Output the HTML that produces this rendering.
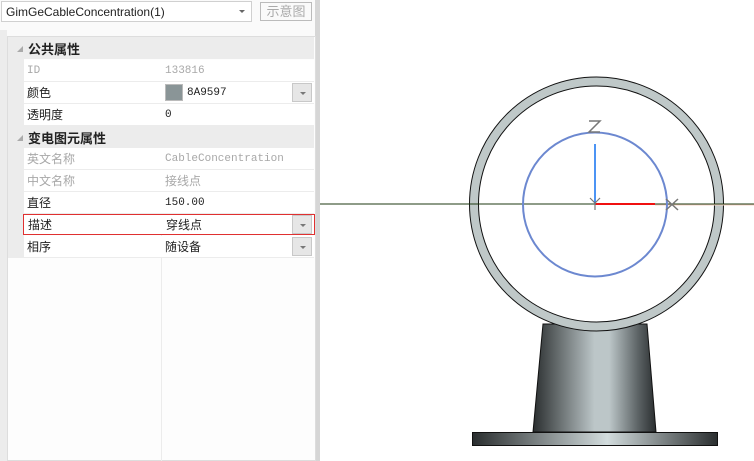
<!DOCTYPE html>
<html><head><meta charset="utf-8"><style>
*{margin:0;padding:0;box-sizing:border-box}
body{width:754px;height:461px;background:#fff;position:relative;overflow:hidden;font-family:"Liberation Sans","Noto Sans CJK SC",sans-serif;font-size:12px;color:#222}
.a{position:absolute}
.row{position:absolute;left:24px;width:290px;height:22px;border-bottom:1px solid #ececec}
.n{position:absolute;left:3px;top:2px}
.v{position:absolute;left:141px;top:2px}
.g{color:#a8a8a8}
.mono{font-family:"Liberation Mono","Noto Sans CJK SC",monospace;font-size:11px;top:5px}
.dd{position:absolute;right:2px;top:1px;width:20px;height:19px;background:#e6e6e6;border:1px solid #c8c8c8}
.dd:after{content:"";position:absolute;left:7px;top:8px;border:3px solid transparent;border-top:3px solid #777}
.hd{position:absolute;left:8px;width:306px;height:22px;background:#ececec;font-weight:bold;font-size:13px}
.hd span{position:absolute;left:20px;top:2px}
.hd i{position:absolute;left:9px;top:9px;border:3px solid transparent;border-right-color:#aaa;border-bottom-color:#aaa}
</style></head><body>
<div class="a" style="left:0;top:0;width:318px;height:461px;background:#fafafa"></div>
<div class="a" style="left:0;top:30px;width:7px;height:431px;background:#ececec"></div>
<div class="a" style="left:315px;top:0;width:5px;height:461px;background:#d6d6d6"></div>
<div class="a" style="left:1px;top:1px;width:251px;height:21px;border:1px solid #d0d0d0;background:#fff"><span class="a" style="left:4px;top:3px">GimGeCableConcentration(1)</span><span class="a" style="left:237px;top:8px;border:3px solid transparent;border-top-color:#666"></span></div>
<div class="a" style="left:260px;top:2px;width:52px;height:19px;border:1px solid #bbb;color:#aaa;font-size:13px;text-align:center;line-height:17px">示意图</div>
<div class="a" style="left:7px;top:36px;width:309px;height:425px;border:1px solid #ddd;background:#fdfdfd"></div>
<div class="a" style="left:8px;top:37px;width:16px;height:221px;background:#ececec"></div>
<div class="a" style="left:161px;top:60px;width:1px;height:401px;background:#ececec"></div>
<div class="hd" style="top:37px"><i></i><span>公共属性</span></div>
<div class="row" style="top:60px;background:#fff"><span class="n g mono">ID</span><span class="v g mono">133816</span></div>
<div class="row" style="top:82px;background:#fff"><span class="n">颜色</span><span class="a" style="left:141px;top:2px;width:18px;height:17px;background:#8a9597;border:1px solid #bbb"></span><span class="v mono" style="left:163px">8A9597</span><div class="dd"></div></div>
<div class="row" style="top:104px;background:#fff"><span class="n">透明度</span><span class="v mono">0</span></div>
<div class="hd" style="top:126px"><i></i><span>变电图元属性</span></div>
<div class="row" style="top:148px;background:#fff"><span class="n g">英文名称</span><span class="v g mono">CableConcentration</span></div>
<div class="row" style="top:170px;background:#fff"><span class="n g">中文名称</span><span class="v g">接线点</span></div>
<div class="row" style="top:192px;background:#fff"><span class="n">直径</span><span class="v mono">150.00</span></div>
<div class="row" style="top:214px;background:#fff;border:1px solid #e03030;height:21px;left:23px;width:292px"><span class="n" style="left:4px;top:1px">描述</span><span class="v" style="left:142px;top:1px">穿线点</span><div class="dd" style="top:0"></div></div>
<div class="row" style="top:236px;background:#fff"><span class="n">相序</span><span class="v">随设备</span><div class="dd"></div></div>
<svg class="a" style="left:0;top:0" width="754" height="461">
<defs>
<linearGradient id="p" x1="0" x2="1"><stop offset="0" stop-color="#2a2e2f"/><stop offset=".5" stop-color="#bcc6c8"/><stop offset=".62" stop-color="#bcc6c8"/><stop offset=".85" stop-color="#5e6567"/><stop offset="1" stop-color="#2a2e2f"/></linearGradient>
<linearGradient id="b" x1="0" x2="1"><stop offset="0" stop-color="#2a2e2f"/><stop offset=".55" stop-color="#d2dcdd"/><stop offset="1" stop-color="#2a2e2f"/></linearGradient>
</defs>
<path d="M543,324 L647,324 L656,432 L533,432 Z" fill="url(#p)" stroke="#111"/>
<rect x="472.5" y="432.5" width="245" height="13" fill="url(#b)" stroke="#111"/>
<circle cx="596.5" cy="204" r="122.5" fill="#fff" stroke="#bfc8c8" stroke-width="9"/>
<circle cx="596.5" cy="204" r="127" fill="none" stroke="#111" stroke-width="1"/>
<circle cx="596.5" cy="204" r="118" fill="none" stroke="#111" stroke-width="1"/>
<line x1="320" y1="204" x2="754" y2="204" stroke="#1e3a10" stroke-width="1"/>
<line x1="655" y1="205" x2="754" y2="205" stroke="#f4d0c4" stroke-width="1"/>
<circle cx="595" cy="204.5" r="72" fill="none" stroke="#6c88d0" stroke-width="2"/>
<line x1="595" y1="204" x2="655" y2="204" stroke="#f01010" stroke-width="2"/>
<line x1="595" y1="144" x2="595" y2="204" stroke="#1070f0" stroke-width="1.5"/>
<path d="M590,198 L595,203 L600,198 M595,203 V210" stroke="#777" fill="none" stroke-width="1.2"/>
<path d="M589,121 H600 L589,132 H600" stroke="#777" fill="none" stroke-width="1.5"/>
<path d="M666,199 L678,210 M678,199 L666,210" stroke="#777" fill="none" stroke-width="1.5"/>
</svg>
</body></html>
